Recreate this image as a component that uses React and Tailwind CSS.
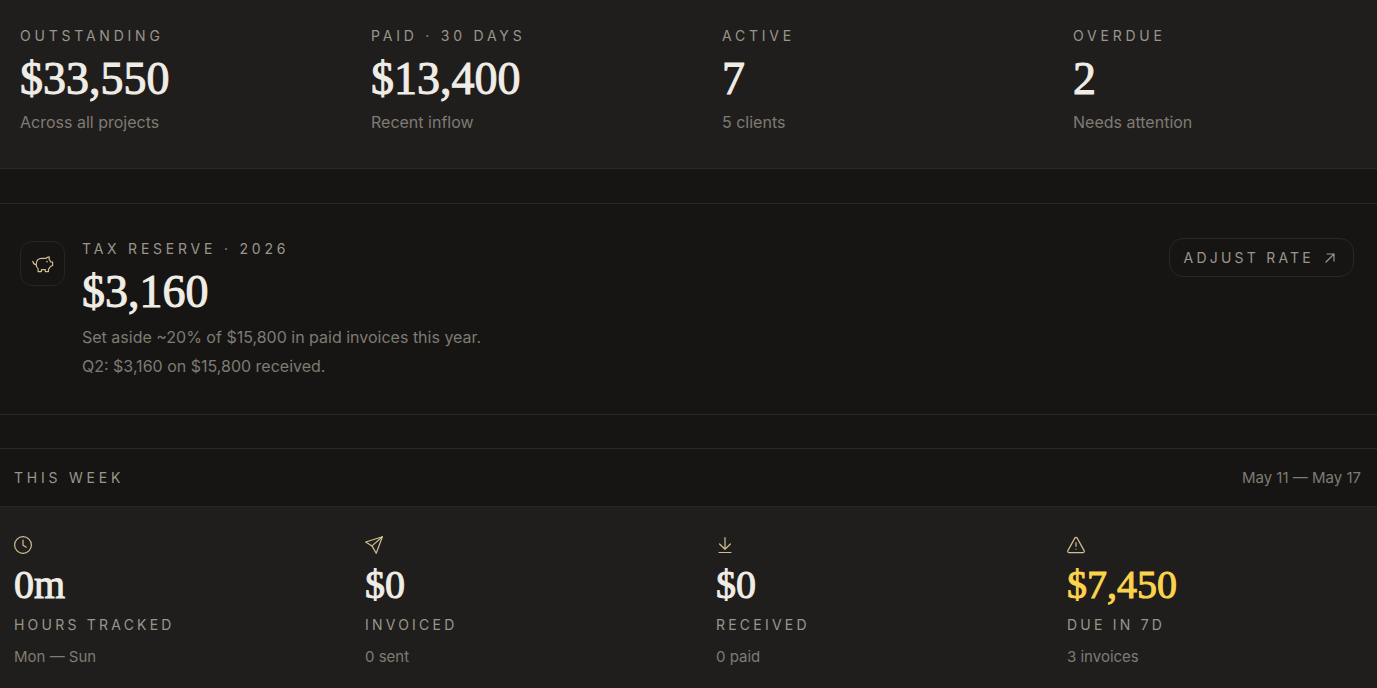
import clsx from 'clsx'

const TOTALS = [
  { label: 'Outstanding', value: '$33,550', note: 'Across all projects' },
  { label: 'Paid · 30 days', value: '$13,400', note: 'Recent inflow' },
  { label: 'Active', value: '7', note: '5 clients' },
  { label: 'Overdue', value: '2', note: 'Needs attention' },
]

const WEEK = [
  { icon: ClockIcon, label: 'Hours tracked', value: '0m', note: 'Mon — Sun' },
  { icon: PlaneIcon, label: 'Invoiced', value: '$0', note: '0 sent' },
  { icon: DownloadIcon, label: 'Received', value: '$0', note: '0 paid' },
  { icon: WarningIcon, label: 'Due in 7d', value: '$7,450', note: '3 invoices', warn: true },
]

const SERIF = "font-['Liberation_Serif',serif] [-webkit-text-stroke:1px_currentColor]"
const LABEL = 'text-sm leading-5 uppercase text-[#99958c]'

function Icon({ size = 18, children }) {
  return (
    <svg
      width={size}
      height={size}
      viewBox={`0 0 ${size} ${size}`}
      fill="none"
      stroke="currentColor"
      strokeWidth="1.2"
      strokeLinecap="round"
      strokeLinejoin="round"
      aria-hidden="true"
    >
      {children}
    </svg>
  )
}

function ClockIcon() {
  return (
    <Icon>
      <circle cx="9" cy="9" r="8.4" />
      <path d="M9 4v5.2l3.3 2" />
    </Icon>
  )
}

function PlaneIcon() {
  return (
    <Icon>
      <path d="M17.4.8.7 6l6.3 3.9 4.2 7.4z" />
      <path d="M7 9.9 17.4.8" />
    </Icon>
  )
}

function DownloadIcon() {
  return (
    <Icon>
      <path d="M9 1.5v11.8M3.6 8 9 13.3 14.4 8M3 16.5h12" />
    </Icon>
  )
}

function WarningIcon() {
  return (
    <Icon>
      <path d="M7.8 2.1.9 14.6c-.5.9.1 2 1.2 2h13.8c1.1 0 1.7-1.1 1.2-2L10.2 2.1c-.5-.9-1.9-.9-2.4 0z" />
      <path d="M9 6.5v3.8M9 13v.1" />
    </Icon>
  )
}

function PiggyIcon() {
  return (
    <Icon size={22}>
      <path d="M.8 8.3c.4 2 1.5 3.2 3.4 3.5" />
      <path d="M4.2 11.4c.1-4 2.2-6 5.6-6h4.2c.8-.9 1.8-1.5 3.2-1.6v2.8c.8.7 1.3 1.4 1.6 2.4h1.8v3.5l-2.200 1c-.4 1.100-1 1.900-1.900 2.500v2.600h-3.200v-1.900H9.400v1.900H6.100v-3c-1.200-1-1.900-2.500-1.900-4.200z" />
      <path d="M15 8.600v.1" strokeWidth="1.5" />
    </Icon>
  )
}

function ArrowIcon() {
  return (
    <Icon size={10}>
      <path d="M1 9 9 1M2 1h7v7" />
    </Icon>
  )
}

export default function App() {
  return (
    <main className="min-h-screen bg-[#161513] font-[Inter,sans-serif] text-[#7f7b74]">
      <section className="grid grid-cols-4 gap-x-[67px] border-b border-[#2b2a27] bg-[#201e1c] px-5 pt-[26px] pb-[34px]">
        {TOTALS.map(item => (
          <div key={item.label}>
            <div className={clsx(LABEL, 'tracking-[0.27em]')}>{item.label}</div>
            <div className={clsx(SERIF, 'mt-[10px] text-[46px] leading-[46px] text-[#f0ede6]')}>{item.value}</div>
            <div className="mt-2 text-base leading-6">{item.note}</div>
          </div>
        ))}
      </section>

      <section className="mt-[34px] flex items-start border-y border-[#2b2a27] px-5 pt-[34px] pb-[33px]">
        <div className="mt-[3px] flex size-[45px] shrink-0 items-center justify-center rounded-xl border border-[#262522] text-[#d0bd92]">
          <PiggyIcon />
        </div>
        <div className="ml-[17px] flex-1 pt-px">
          <div className={clsx(LABEL, 'tracking-[0.27em]')}>Tax reserve · 2026</div>
          <div className={clsx(SERIF, 'mt-[10px] text-[46px] leading-[46px] text-[#f0ede6]')}>$3,160</div>
          <p className="mt-2 text-base leading-[29px]">
            Set aside ~20% of $15,800 in paid invoices this year.
            <br />
            Q2: $3,160 on $15,800 received.
          </p>
        </div>
        <button
          type="button"
          className={clsx(LABEL, 'mr-[3px] flex h-[39px] items-center gap-[11px] rounded-[14px] border border-[#282724] pr-[18px] pl-[14px] tracking-[0.23em]')}
        >
          Adjust rate
          <ArrowIcon />
        </button>
      </section>

      <section className="mt-[33px] border-t border-[#2b2a27]">
        <header className="flex h-[58px] items-center justify-between border-b border-[#262522] pr-4 pl-[14px]">
          <h2 className={clsx(LABEL, 'tracking-[0.27em]')}>This week</h2>
          <span className="text-[15px] leading-5">May 11 — May 17</span>
        </header>
        <div className="grid grid-cols-4 gap-x-[55px] bg-[#201e1c] px-[14px] pt-[29px] pb-[21px]">
          {WEEK.map(({ icon: WeekIcon, label, value, note, warn }) => (
            <div key={label}>
              <div className="h-[18px] text-[#cfc094]">
                <WeekIcon />
              </div>
              <div className={clsx(SERIF, 'mt-[11px] text-[40px] leading-10', warn ? 'text-[#fcd34d]' : 'text-[#f0ede6]')}>
                {value}
              </div>
              <div className={clsx(LABEL, 'mt-[10px] tracking-[0.23em]')}>{label}</div>
              <div className="mt-3 text-[15px] leading-5">{note}</div>
            </div>
          ))}
        </div>
      </section>
    </main>
  )
}
